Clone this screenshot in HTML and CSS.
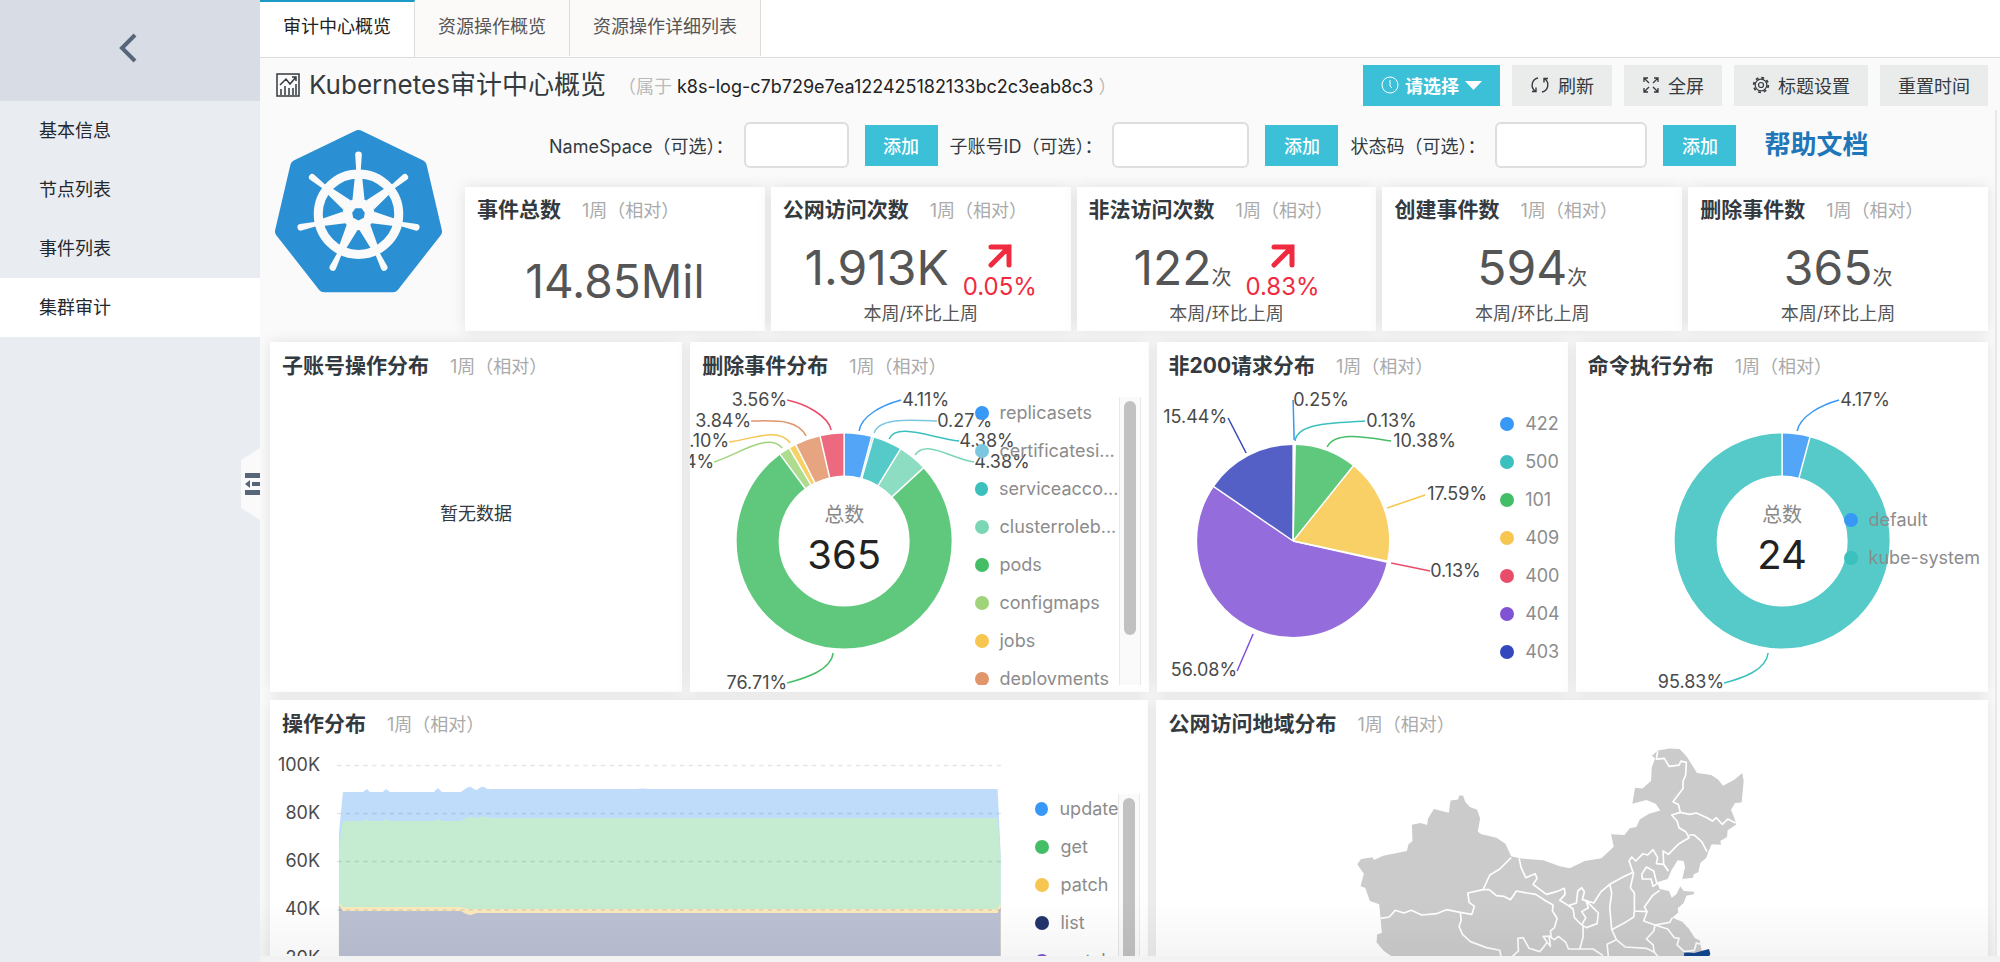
FILE: index.html
```html
<!DOCTYPE html>
<html lang="zh">
<head>
    <meta charset="UTF-8">
    <meta name="viewport" content="width=device-width, initial-scale=1.0">
    <title>Kubernetes审计中心概览</title>
    <link rel="stylesheet" href="styles.css">
</head>
<body>
    <div class="app">
        <!-- 侧边栏 -->
        <aside class="sidebar">
            <button class="sidebar-back" aria-label="返回">
                <svg width="20" height="30" viewBox="0 0 20 30"><path d="M17 2 4 15l13 13" fill="none" stroke="#56657a" stroke-width="4"/></svg>
            </button>
            <nav class="sidebar-nav">
                <a href="#">基本信息</a>
                <a href="#">节点列表</a>
                <a href="#">事件列表</a>
                <a href="#" class="active">集群审计</a>
            </nav>
            <button class="sidebar-toggle" aria-label="收起">
                <svg width="15" height="22" viewBox="0 0 15 22" fill="#56657a"><path d="M0 0h15v5H0zM7 9h8v4H7zM0 17h15v5H0zM5 7v8L0 11z"/></svg>
            </button>
        </aside>

        <main class="main">
            <!-- 页签 -->
            <nav class="tabs">
                <a href="#" class="tab active">审计中心概览</a>
                <a href="#" class="tab">资源操作概览</a>
                <a href="#" class="tab">资源操作详细列表</a>
            </nav>

            <!-- 标题栏 -->
            <header class="title-bar">
                <svg class="title-icon" width="24" height="24" viewBox="0 0 24 24" fill="none" stroke="#333a40" stroke-width="1.5"><path d="M1 1h22v22H1z"/><path d="M4 12l6-6 4 5 6-7M16 4h4v4M5 22v-6M9 22v-9M13 22v-7M17 22v-7M20 22V11"/></svg>
                <h1>Kubernetes审计中心概览</h1>
                <p class="belong">（属于 <span>k8s-log-c7b729e7ea122425182133bc2c3eab8c3</span> ）</p>
                <div class="actions">
                    <button class="btn btn-primary">
                        <svg width="18" height="18" viewBox="0 0 18 18" fill="none" stroke="#fff"><circle cx="9" cy="9" r="8"/><path d="M9 4v6l2 2"/></svg>
                        请选择
                        <svg width="17" height="9" viewBox="0 0 17 9" fill="#fff"><path d="M0 0h17L8.500 9z"/></svg>
                    </button>
                    <button class="btn">
                        <svg width="20" height="18" viewBox="0 0 20 18" fill="none" stroke="#333a40" stroke-width="1.400"><path d="M8 2C2 3 0 11 5 15M2 15.500h4v-4M12 16c6-1 8-9 3-13M18 2.500h-4v4"/></svg>
                        刷新
                    </button>
                    <button class="btn">
                        <svg width="18" height="18" viewBox="0 0 18 18" fill="none" stroke="#333a40" stroke-width="1.300"><path d="M2 6V2h4M2 2l5 5M12 2h4v4M16 2l-5 5M2 12v4h4M2 16l5-5M16 12v4h-4M16 16l-5-5"/></svg>
                        全屏
                    </button>
                    <button class="btn">
                        <svg width="18" height="18" viewBox="0 0 18 18" fill="none" stroke="#333a40" stroke-width="1.200"><circle cx="9" cy="9" r="2.500"/><circle cx="9" cy="9" r="5.800"/><circle cx="9" cy="9" r="7.300" stroke-width="1.800" stroke-dasharray="2.870 2.870"/></svg>
                        标题设置
                    </button>
                    <button class="btn">重置时间</button>
                </div>
            </header>

            <div class="dashboard">
                <section class="overview">
                    <div class="logo">
                        <svg width="167" height="163" viewBox="44 58 502 490">
                            <path d="M295 76 482 166 528 363 399 528H191L62 363 108 166Z" fill="#2b90d3" stroke="#2b90d3" stroke-width="36" stroke-linejoin="round"/>
                            <g transform="translate(295 311)" fill="#fafafa">
                                <circle r="121" fill="none" stroke="#fafafa" stroke-width="27"/>
                                <circle r="48"/>
                                <path id="spoke" d="M-18-45-11-112-7-135-10-178A10 10 0 0 1 10-178L7-135 11-112 18-45Z"/>
                                <use href="#spoke" transform="rotate(51.430)"/>
                                <use href="#spoke" transform="rotate(102.860)"/>
                                <use href="#spoke" transform="rotate(154.290)"/>
                                <use href="#spoke" transform="rotate(205.710)"/>
                                <use href="#spoke" transform="rotate(257.140)"/>
                                <use href="#spoke" transform="rotate(308.570)"/>
                                <path d="M-9-18H9L19-4 16 11 0 19-16 11-19-4Z" fill="#2b90d3"/>
                            </g>
                        </svg>
                    </div>
                    <div class="overview-main">
                        <form class="filters">
                            <div class="filter">
                                <label for="namespace">NameSpace（可选）：</label>
                                <input type="text" id="namespace" class="input-small">
                                <button type="button" class="btn-add">添加</button>
                            </div>
                            <div class="filter">
                                <label for="account">子账号ID（可选）：</label>
                                <input type="text" id="account" class="input-medium">
                                <button type="button" class="btn-add">添加</button>
                            </div>
                            <div class="filter">
                                <label for="status">状态码（可选）：</label>
                                <input type="text" id="status" class="input-large">
                                <button type="button" class="btn-add">添加</button>
                            </div>
                            <a href="#" class="help">帮助文档</a>
                        </form>

                        <!-- 统计卡片 -->
                        <div class="stats">
                            <article class="panel stat">
                                <h2>事件总数 <small>1周（相对）</small></h2>
                                <div class="stat-single">14.85Mil</div>
                            </article>
                            <article class="panel stat">
                                <h2>公网访问次数 <small>1周（相对）</small></h2>
                                <div class="stat-value">
                                    <span class="number">1.913K</span>
                                    <span class="trend">
                                        <svg width="24" height="24" viewBox="0 0 24 24" fill="none" stroke="#f02b40" stroke-width="5"><path d="M3 3h18v18M21 3 3 21" stroke-linecap="round"/></svg>
                                        0.05%
                                    </span>
                                </div>
                                <p>本周/环比上周</p>
                            </article>
                            <article class="panel stat">
                                <h2>非法访问次数 <small>1周（相对）</small></h2>
                                <div class="stat-value">
                                    <span class="number">122<i>次</i></span>
                                    <span class="trend">
                                        <svg width="24" height="24" viewBox="0 0 24 24" fill="none" stroke="#f02b40" stroke-width="5"><path d="M3 3h18v18M21 3 3 21" stroke-linecap="round"/></svg>
                                        0.83%
                                    </span>
                                </div>
                                <p>本周/环比上周</p>
                            </article>
                            <article class="panel stat">
                                <h2>创建事件数 <small>1周（相对）</small></h2>
                                <div class="stat-value"><span class="number">594<i>次</i></span></div>
                                <p>本周/环比上周</p>
                            </article>
                            <article class="panel stat">
                                <h2>删除事件数 <small>1周（相对）</small></h2>
                                <div class="stat-value"><span class="number">365<i>次</i></span></div>
                                <p>本周/环比上周</p>
                            </article>
                        </div>
                    </div>
                </section>

                <!-- 分布图 -->
                <section class="row-pies">
                    <article class="panel">
                        <h2>子账号操作分布 <small>1周（相对）</small></h2>
                        <div class="empty">暂无数据</div>
                    </article>

                    <article class="panel">
                        <h2>删除事件分布 <small>1周（相对）</small></h2>
                        <div class="chart">
                            <svg class="plot" viewBox="0 0 458 304">
                                <g transform="translate(154 152) rotate(-90)" fill="none" stroke-width="42">
                                    <circle r="86.500" pathLength="100" stroke="#52a5f7" stroke-dasharray="4.110 95.890"/>
                                    <circle r="86.500" pathLength="100" stroke="#8fd0e6" stroke-dasharray=".27 99.730" stroke-dashoffset="-4.110"/>
                                    <circle r="86.500" pathLength="100" stroke="#55cac8" stroke-dasharray="4.380 95.620" stroke-dashoffset="-4.380"/>
                                    <circle r="86.500" pathLength="100" stroke="#8cddc1" stroke-dasharray="4.380 95.620" stroke-dashoffset="-8.760"/>
                                    <circle r="86.500" pathLength="100" stroke="#60c87d" stroke-dasharray="76.710 23.290" stroke-dashoffset="-13.140"/>
                                    <circle r="86.500" pathLength="100" stroke="#aedc8f" stroke-dasharray="1.640 98.360" stroke-dashoffset="-89.850"/>
                                    <circle r="86.500" pathLength="100" stroke="#f8d065" stroke-dasharray="1.100 98.900" stroke-dashoffset="-91.490"/>
                                    <circle r="86.500" pathLength="100" stroke="#e6a580" stroke-dasharray="3.840 96.160" stroke-dashoffset="-92.590"/>
                                    <circle r="86.500" pathLength="100" stroke="#ec6980" stroke-dasharray="3.560 96.440" stroke-dashoffset="-96.430"/>
                                </g>
                                <g class="seams" transform="translate(154 152)">
                                    <path d="M0-64V-109"/>
                                    <path d="M0-64V-109" transform="rotate(14.800)"/>
                                    <path d="M0-64V-109" transform="rotate(15.800)"/>
                                    <path d="M0-64V-109" transform="rotate(31.500)"/>
                                    <path d="M0-64V-109" transform="rotate(47.300)"/>
                                    <path d="M0-64V-109" transform="rotate(323.500)"/>
                                    <path d="M0-64V-109" transform="rotate(329.400)"/>
                                    <path d="M0-64V-109" transform="rotate(333.300)"/>
                                    <path d="M0-64V-109" transform="rotate(347.100)"/>
                                </g>
                                <g class="leaders">
                                    <path stroke="#3898f5" d="M169 42C171 27 192 16 211 11"/>
                                    <path stroke="#7cc7e0" d="M184 44C189 28 222 31 247 32"/>
                                    <path stroke="#3bc0bd" d="M199 50C206 33 242 49 269 52"/>
                                    <path stroke="#7bd6b5" d="M225 66C236 50 262 70 284 73"/>
                                    <path stroke="#ea4d6a" d="M141 41C138 27 116 15 97 11"/>
                                    <path stroke="#e0956b" d="M116 47C107 29 82 32 61 32"/>
                                    <path stroke="#f6c650" d="M100 54C88 38 62 50 39 53"/>
                                    <path stroke="#a1d37b" d="M92 59C78 43 49 65 24 73"/>
                                    <path stroke="#44be66" d="M143 264C141 281 116 289 97 294"/>
                                </g>
                                <g class="labels">
                                    <text x="212" y="17">4.11%</text>
                                    <text x="247" y="38">0.27%</text>
                                    <text x="269" y="58">4.38%</text>
                                    <text x="284" y="79">4.38%</text>
                                    <g text-anchor="end">
                                        <text x="97" y="17">3.56%</text>
                                        <text x="61" y="38">3.84%</text>
                                        <text x="39" y="58">1.10%</text>
                                        <text x="24" y="79">1.64%</text>
                                        <text x="97" y="300">76.71%</text>
                                    </g>
                                </g>
                                <text class="total-name" x="154" y="133">总数</text>
                                <text class="total" x="154" y="180">365</text>
                            </svg>
                            <ul class="legend legend-delete">
                                <li class="c-blue">replicasets</li>
                                <li class="c-sky">certificatesi...</li>
                                <li class="c-teal">serviceacco...</li>
                                <li class="c-mint">clusterroleb...</li>
                                <li class="c-green">pods</li>
                                <li class="c-lime">configmaps</li>
                                <li class="c-yellow">jobs</li>
                                <li class="c-orange">deployments</li>
                            </ul>
                            <div class="scroll scroll-delete"><span></span></div>
                        </div>
                    </article>

                    <article class="panel">
                        <h2>非200请求分布 <small>1周（相对）</small></h2>
                        <div class="chart">
                            <svg class="plot" viewBox="0 0 411 304">
                                <g transform="translate(136 152) rotate(-90)" fill="none" stroke-width="96">
                                    <circle r="48" pathLength="100" stroke="#60c87d" stroke-dasharray="10.380 89.620" stroke-dashoffset="-.38"/>
                                    <circle r="48" pathLength="100" stroke="#f8d065" stroke-dasharray="17.590 82.410" stroke-dashoffset="-10.760"/>
                                    <circle r="48" pathLength="100" stroke="#956cdb" stroke-dasharray="56.080 43.920" stroke-dashoffset="-28.480"/>
                                    <circle r="48" pathLength="100" stroke="#5560c7" stroke-dasharray="15.440 84.560" stroke-dashoffset="-84.560"/>
                                </g>
                                <g class="seams" transform="translate(136 152)">
                                    <path d="M0 0V-98"/>
                                    <path d="M0 0V-98" transform="rotate(1.200)"/>
                                    <path d="M0 0V-98" transform="rotate(38.700)"/>
                                    <path d="M0 0V-98" transform="rotate(102.100)"/>
                                    <path d="M0 0V-98" transform="rotate(102.700)"/>
                                    <path d="M0 0V-98" transform="rotate(304.400)"/>
                                </g>
                                <g class="leaders">
                                    <path stroke="#3898f5" d="M136 11 137 51"/>
                                    <path stroke="#3bc0bd" d="M138 52C140 33 181 34 208 32"/>
                                    <path stroke="#44be66" d="M170 58C178 42 208 48 234 52"/>
                                    <path stroke="#f6c650" d="M230 119 268 106"/>
                                    <path stroke="#ea4d6a" d="M234 174 273 182"/>
                                    <path stroke="#8053d5" d="M96 245 80 282"/>
                                    <path stroke="#3547bc" d="M89 64 71 29"/>
                                </g>
                                <g class="labels">
                                    <text x="136" y="17">0.25%</text>
                                    <text x="209" y="38">0.13%</text>
                                    <text x="236" y="58">10.38%</text>
                                    <text x="270" y="111">17.59%</text>
                                    <text x="273" y="188">0.13%</text>
                                    <g text-anchor="end">
                                        <text x="70" y="34">15.44%</text>
                                        <text x="80" y="287">56.08%</text>
                                    </g>
                                </g>
                            </svg>
                            <ul class="legend legend-status">
                                <li class="c-blue">422</li>
                                <li class="c-teal">500</li>
                                <li class="c-green">101</li>
                                <li class="c-yellow">409</li>
                                <li class="c-red">400</li>
                                <li class="c-purple">404</li>
                                <li class="c-indigo">403</li>
                            </ul>
                        </div>
                    </article>

                    <article class="panel">
                        <h2>命令执行分布 <small>1周（相对）</small></h2>
                        <div class="chart">
                            <svg class="plot" viewBox="0 0 412 304">
                                <g transform="translate(206 152) rotate(-90)" fill="none" stroke-width="42">
                                    <circle r="86.500" pathLength="100" stroke="#52a5f7" stroke-dasharray="4.170 95.830"/>
                                    <circle r="86.500" pathLength="100" stroke="#55cac8" stroke-dasharray="95.830 4.170" stroke-dashoffset="-4.170"/>
                                </g>
                                <g class="seams" transform="translate(206 152)">
                                    <path d="M0-64V-109"/>
                                    <path d="M0-64V-109" transform="rotate(15)"/>
                                </g>
                                <g class="leaders">
                                    <path stroke="#3898f5" d="M221 42C224 27 245 16 263 11"/>
                                    <path stroke="#3bc0bd" d="M192 264C190 281 167 289 148 294"/>
                                </g>
                                <g class="labels">
                                    <text x="264" y="17">4.17%</text>
                                    <text x="148" y="299" text-anchor="end">95.83%</text>
                                </g>
                                <text class="total-name" x="206" y="133">总数</text>
                                <text class="total" x="206" y="180">24</text>
                            </svg>
                            <ul class="legend legend-command">
                                <li class="c-blue">default</li>
                                <li class="c-teal">kube-system</li>
                            </ul>
                        </div>
                    </article>
                </section>

                <section class="row-wide">
                    <article class="panel">
                        <h2>操作分布 <small>1周（相对）</small></h2>
                        <div class="chart">
                            <svg class="plot plot-area" viewBox="0 0 879 304">
                                <path fill="#bfddfb" d="M69 304V86L73 45H93L97 42 100 45H113L116 42 120 45H164L168 41 172 45H191Q198 39 201 40 205 43 207 43 211 39 214 40 218 43 221 42H366Q373 41 380 42H728L731 105V304Z"/>
                                <path fill="#c5ebd1" d="M69 304V99L73 74H93L97 72 100 74H113L116 72 120 74H164L168 72 172 74H191Q198 69 201 70L207 71Q212 69 215 70L221 71H728L731 108V304Z"/>
                                <path fill="#fbe9bd" d="M69 304V156L73 160H191L198 162H728L731 156V304Z"/>
                                <path fill="#bbc1d3" d="M69 304V158L73 164H191Q197 168 201 168L207 166H728L731 160V304Z"/>
                                <path class="grid" d="M67 18.500H733M67 66.500H733M67 114.500H733M67 163H733M67 211H733"/>
                                <g class="labels" text-anchor="end">
                                    <text x="50" y="24">100K</text>
                                    <text x="50" y="72">80K</text>
                                    <text x="50" y="120">60K</text>
                                    <text x="50" y="168">40K</text>
                                    <text x="50" y="217">20K</text>
                                </g>
                            </svg>
                            <ul class="legend legend-verbs">
                                <li class="c-blue">update</li>
                                <li class="c-green">get</li>
                                <li class="c-yellow">patch</li>
                                <li class="c-navy">list</li>
                                <li class="c-purple">watch</li>
                            </ul>
                            <div class="scroll scroll-verbs"><span></span></div>
                        </div>
                    </article>

                    <article class="panel">
                        <h2>公网访问地域分布 <small>1周（相对）</small></h2>
                        <div class="chart">
                            <svg class="plot" viewBox="-432 138 2496 912">
                                <path fill="#cbcbcb" d="M172 490 184 474 218 469 222 477 250 464 321 450 326 430 338 420 336 371 362 366 382 372 384 354 402 324 447 335 452 298 475 295 478 283 490 284 496 302 510 318 532 326 541 352 534 392 545 400 590 410 617 428 634 466 660 472 730 478 780 496 810 502 855 480 905 472 942 437 934 400 974 402 990 382 1010 378 1020 355 1048 338 1082 328 1068 308 1040 297 998 308 1006 260 1028 262 1054 240 1056 200 1066 172 1057 164 1074 148 1110 142 1140 144 1162 168 1192 216 1235 222 1256 236 1270 254 1304 236 1328 216 1332 240 1326 304 1306 306 1294 326 1306 356 1310 370 1284 388 1282 408 1262 420 1264 431 1236 430 1226 452 1220 470 1202 486 1196 514 1182 520 1180 530 1148 534 1156 498 1152 480 1134 478 1116 506 1104 534 1072 544 1080 564 1108 570 1116 590 1130 580 1142 556 1152 570 1184 572 1182 580 1160 584 1152 606 1134 622 1136 634 1118 650 1148 662 1168 684 1186 712 1200 718 1206 748 1228 750 1220 1050H330V780L278 768 252 750 230 724 232 700 246 696 242 652 238 610 210 600 196 560 182 556 192 518Z"/>
                                <path fill="#11468f" d="M1152 772 1154 754 1184 756 1206 750 1228 744 1232 758 1226 772Z"/>
                                <g class="borders">
                                    <path d="M242 652 268 648 286 628 312 636 334 628 366 642 410 638 440 626 482 634 516 640 524 616 508 604 504 576 550 566 570 522 600 504 634 470"/>
                                    <path d="M550 566 568 566 590 584 612 586 632 596 650 570 682 576 708 580 732 596 760 612 758 630 772 652 764 680 752 690 754 706 730 706 742 724 730 740 720 752 688 742 670 710 654 712 656 750 636 768"/>
                                    <path d="M482 636 484 658 478 676 488 700 512 722 560 740 600 748 604 768M658 472 664 500 678 530 706 518 712 532 700 550 740 580 770 572 794 562 796 580 780 598 806 614 830 606 834 570 846 560 854 572 848 596 882 606 904 572 930 550 970 528 1000 514 988 480 996 468 1008 480 1030 458 1044 462 1060 446 1074 470 1070 488 1092 490 1106 510"/>
                                    <path d="M1106 510 1092 490 1090 450 1106 460 1138 428 1168 410 1158 392 1138 380 1132 360 1116 342 1142 334 1136 310 1120 302 1150 262 1150 240 1158 222 1160 184 1144 180 1138 192 1108 196 1094 172 1070 174 1074 150"/>
                                    <path d="M1142 334 1170 340 1190 336 1222 350 1238 360 1250 350 1268 370 1284 354 1308 366M1168 402 1184 402 1206 422 1222 452"/>
                                    <path d="M806 614 820 624 824 650 846 672 858 650 846 632 866 620 858 598 896 636 892 668 860 680 850 674 850 708 840 744 806 744 798 724 776 706 764 716 748 706 752 736 742 724"/>
                                    <path d="M930 550 936 576 930 620 936 686 980 662 1002 648 1004 630 1004 576 992 560 1002 514M936 686 950 716 922 730 926 768M950 716 976 738 1040 742 1064 754 1060 732 1040 714 1062 690 1066 672 1032 660 1042 632 1004 630M1042 632 1034 618 1058 584 1080 568"/>
                                    <path d="M1066 672 1110 664 1118 650M1066 672 1104 684 1124 710 1138 712 1132 732 1154 752M1154 752 1184 748 1190 726 1204 730M840 744 880 744 910 764M1026 520 1040 498 1062 510 1068 534 1072 548 1060 556 1054 534 1028 534ZM1064 754 1076 768"/>
                                </g>
                            </svg>
                        </div>
                    </article>
                </section>
            </div>
            <div class="bottom-bar"></div>
        </main>
    </div>
</body>
</html>
```
FILE: styles.css
```css
/* 全局样式 */
* {
    margin: 0;
    padding: 0;
    box-sizing: border-box;
}

body {
    font-family: Inter, 'Noto Sans CJK SC', sans-serif;
    font-size: 18px;
    color: #333a40;
    background: #fafafa;
}

button,
input {
    font: inherit;
    color: inherit;
    border: 0;
}

button {
    cursor: pointer;
}

a {
    color: inherit;
    text-decoration: none;
}

ul {
    list-style: none;
}

.app {
    display: flex;
    height: 100vh;
    overflow: hidden;
}

/* 侧边栏 */
.sidebar {
    position: relative;
    flex: 0 0 260px;
    background: #e9ecf1;
}

.sidebar-back {
    display: flex;
    align-items: center;
    justify-content: center;
    width: 100%;
    height: 101px;
    padding: 0 4px 6px 0;
    background: #d8dde5;
}

.sidebar-nav a {
    display: block;
    padding-left: 39px;
    line-height: 59px;
    color: #22282e;
}

.sidebar-nav .active {
    background: #fff;
}

.sidebar-toggle {
    position: absolute;
    right: 0;
    top: 448px;
    display: flex;
    align-items: center;
    justify-content: flex-end;
    width: 19px;
    height: 72px;
    background: #fafafa;
    clip-path: polygon(0 12px, 100% 0, 100% 100%, 0 60px);
}

/* 页签 */
.main {
    flex: 1;
    min-width: 0;
    display: flex;
    flex-direction: column;
}

.tabs {
    display: flex;
    flex: 0 0 57px;
    background: #fff;
    border-bottom: 1px solid #dcdcdc;
}

.tab {
    height: 56px;
    padding: 0 23px;
    line-height: 54px;
    color: #555;
    background: #fbfaf8;
    border-right: 1px solid #dcdcdc;
}

.tab.active {
    height: 57px;
    line-height: 50px;
    color: #222;
    background: #fff;
    border-top: 2px solid #1b9ac6;
}

/* 标题栏 */
.title-bar {
    display: flex;
    align-items: center;
    flex: 0 0 52px;
    padding: 4px 12px 2px 16px;
}

.title-bar h1 {
    margin-left: 9px;
    font-size: 26px;
    line-height: 40px;
    font-weight: 400;
}

.belong {
    margin-left: 12px;
    color: #bbb;
}

.belong span {
    color: #222;
}

.actions {
    display: flex;
    gap: 12px;
    margin-left: auto;
}

.btn {
    display: flex;
    align-items: center;
    gap: 8px;
    height: 41px;
    padding: 0 18px;
    background: #eaebeb;
}

.btn-primary {
    gap: 6px;
    color: #fff;
    font-weight: 700;
    background: #3bc0d8;
}

/* 概览区域 */
.dashboard {
    position: relative;
    flex: 1;
    min-height: 0;
    overflow: hidden;
    margin-right: 3px;
    padding: 0 7px 0 10px;
    border-right: 2px solid #e8e8e8;
}

.dashboard::after {
    content: '';
    position: absolute;
    left: 0;
    right: 0;
    bottom: 0;
    height: 56px;
    background: linear-gradient(rgba(0, 0, 0, 0), rgba(0, 0, 0, 0.04));
    pointer-events: none;
}

.overview {
    display: flex;
    margin-bottom: 11px;
}

.logo {
    flex: 0 0 195px;
    padding: 20px 0 0 5px;
}

.overview-main {
    flex: 1;
}

.filters {
    display: flex;
    align-items: center;
    gap: 12px;
    padding: 12px 0 19px 84px;
}

.filter {
    display: flex;
    align-items: center;
}

.filter input {
    height: 46px;
    margin: 0 16px 0 10px;
    padding: 0 10px;
    border: 2px solid #dedede;
    border-radius: 6px;
    background: #fff;
}

.filter .input-small {
    width: 105px;
}

.filter .input-medium {
    width: 137px;
}

.filter .input-large {
    width: 152px;
}

.btn-add {
    width: 73px;
    height: 41px;
    color: #fff;
    font-weight: 500;
    background: #3bc0d8;
}

.help {
    margin-left: 16px;
    font-size: 26px;
    line-height: 40px;
    font-weight: 700;
    color: #1f76b8;
}

/* 面板 */
.panel {
    min-width: 0;
    background: #fff;
    box-shadow: 0 0 14px rgba(0, 0, 0, 0.1);
}

.panel h2 {
    padding: 9px 12px 7px;
    font-size: 21px;
    line-height: 30px;
    font-weight: 700;
    white-space: nowrap;
}

.panel small {
    margin-left: 16px;
    font-size: 18px;
    font-weight: 400;
    color: #aaa;
}

.stats {
    display: grid;
    grid-template-columns: repeat(5, 1fr);
    gap: 6px;
}

.stat {
    height: 144px;
    color: #555;
    text-align: center;
}

.stat h2 {
    padding: 8px 12px 0;
    color: #333a40;
    text-align: left;
}

.stat-single {
    font-size: 46px;
    line-height: 110px;
}

.stat-value {
    display: flex;
    justify-content: center;
    gap: 14px;
    height: 76px;
    padding-top: 14px;
}

.stat .number {
    font-size: 48px;
    line-height: 56px;
}

.stat i {
    font-size: 20px;
    font-style: normal;
}

.trend {
    display: flex;
    flex-direction: column;
    align-items: center;
    gap: 4px;
    padding-top: 4px;
    font-size: 24px;
    line-height: 30px;
    color: #f02b40;
}

.stat p {
    line-height: 24px;
}

/* 图表 */
.row-pies {
    display: grid;
    grid-template-columns: 412fr 458fr 411fr 412fr;
    gap: 8px;
    margin-bottom: 8px;
}

.row-pies .panel {
    height: 350px;
}

.row-wide {
    display: grid;
    grid-template-columns: 879fr 832fr;
    gap: 8px;
}

.empty {
    line-height: 250px;
    text-align: center;
}

.chart {
    position: relative;
}

.plot {
    display: block;
    width: 100%;
    height: 304px;
}

.seams path {
    fill: none;
    stroke: #fff;
    stroke-width: 1.5;
}

.leaders path {
    fill: none;
    stroke-width: 1.5;
}

.labels {
    font-size: 18px;
    fill: #4a4a4a;
}

.total-name {
    font-size: 20px;
    fill: #888;
    text-anchor: middle;
}

.total {
    font-size: 40px;
    fill: #222;
    text-anchor: middle;
}

.grid {
    fill: none;
    stroke: rgba(0, 0, 0, 0.1);
    stroke-width: 1.5;
    stroke-dasharray: 4.4 4.4;
}

.borders path {
    fill: none;
    stroke: #fff;
    stroke-width: 5;
    stroke-linejoin: round;
}

/* 图例 */
.legend {
    position: absolute;
    overflow: hidden;
    color: #8c8c8c;
    white-space: nowrap;
}

.legend li {
    display: flex;
    align-items: center;
    gap: 11px;
    line-height: 38px;
}

.legend li::before {
    content: '';
    width: 14px;
    height: 14px;
    border-radius: 50%;
    background: currentColor;
}

.legend .c-blue::before { background: #3898f5; }
.legend .c-sky::before { background: #7cc7e0; }
.legend .c-teal::before { background: #3bc0bd; }
.legend .c-mint::before { background: #7bd6b5; }
.legend .c-green::before { background: #44be66; }
.legend .c-lime::before { background: #a1d37b; }
.legend .c-yellow::before { background: #f6c650; }
.legend .c-orange::before { background: #e0956b; }
.legend .c-red::before { background: #ea4d6a; }
.legend .c-purple::before { background: #8053d5; }
.legend .c-indigo::before { background: #3547bc; }
.legend .c-navy::before { background: #23346b; }

.legend-delete {
    top: 5px;
    right: 30px;
    width: 144px;
    height: 291px;
}

.legend-status {
    top: 16px;
    right: 8px;
}

.legend-command {
    top: 112px;
    right: 8px;
}

.legend-verbs {
    top: 43px;
    right: 30px;
    width: 83px;
}

.scroll {
    position: absolute;
    right: 8px;
    width: 22px;
    padding: 4px 4px 0;
    background: #fafafa;
    border: solid #e8e8e8;
    border-width: 0 1px;
}

.scroll span {
    display: block;
    height: 234px;
    border-radius: 6px;
    background: #c1c1c1;
}

.scroll-delete {
    top: 8px;
    height: 288px;
}

.scroll-verbs {
    top: 47px;
    height: 257px;
}

.bottom-bar {
    flex: 0 0 6px;
    background: #f2f2f2;
}
```
